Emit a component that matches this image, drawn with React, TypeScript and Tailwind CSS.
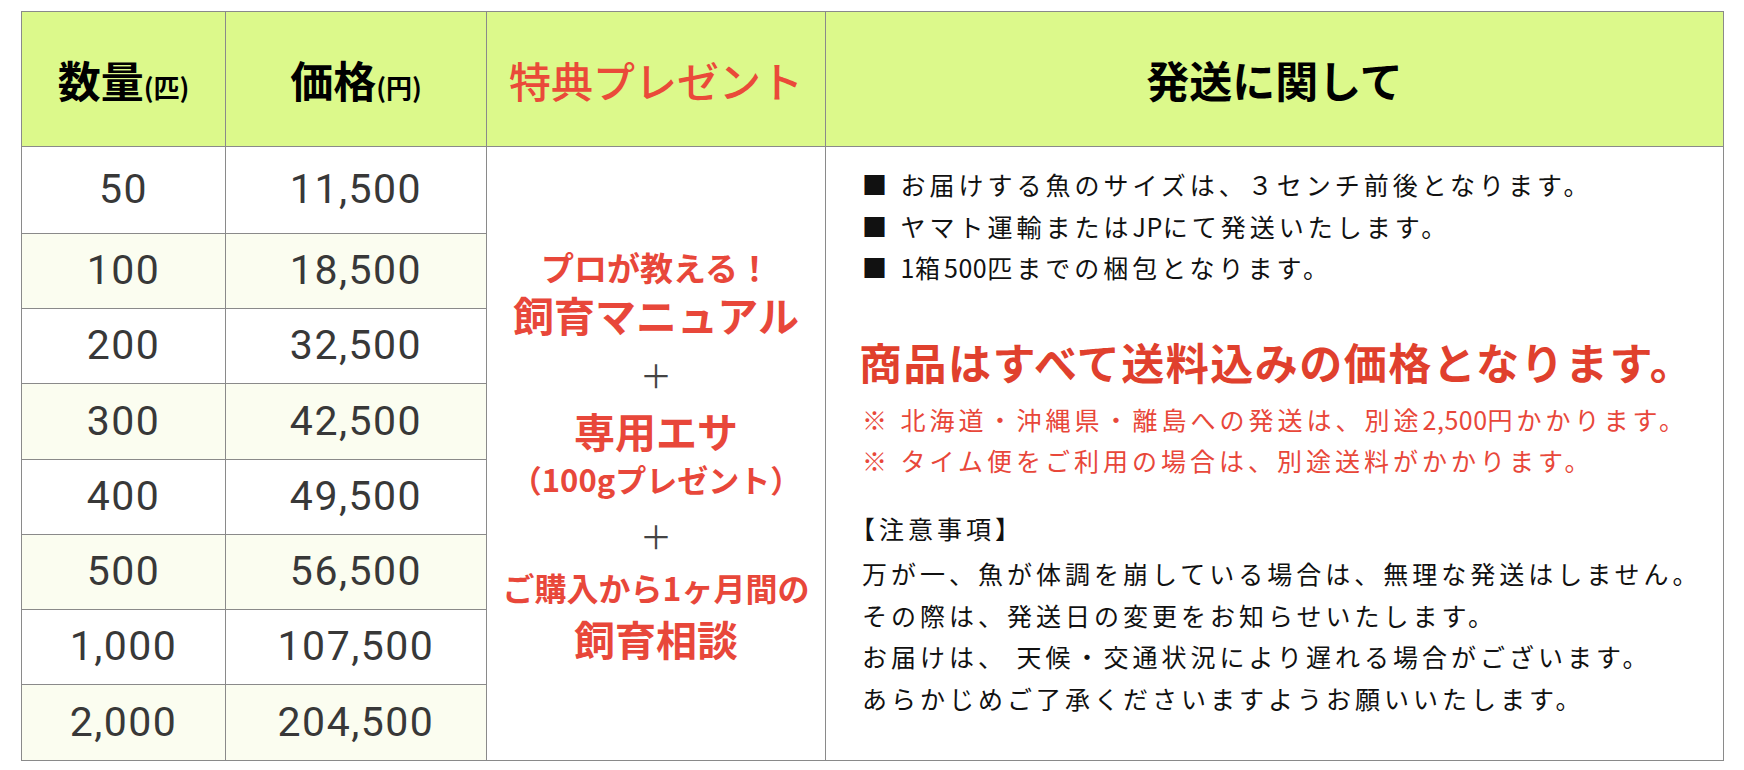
const jp = "font-['Noto_Sans_CJK_JP',sans-serif]";

const rows = [
  { qty: "50", price: "11,500" },
  { qty: "100", price: "18,500" },
  { qty: "200", price: "32,500" },
  { qty: "300", price: "42,500" },
  { qty: "400", price: "49,500" },
  { qty: "500", price: "56,500" },
  { qty: "1,000", price: "107,500" },
  { qty: "2,000", price: "204,500" },
];

const cell = "border-r border-b border-[#8a8a8a]";
const head = `${cell} bg-[#dcf98b] flex items-center justify-center`;
const num =
  "font-['Roboto','Liberation_Sans',sans-serif] font-normal text-[41px] tracking-[1.5px] text-[#383838]";
// half-width runs inside the tracked Japanese text
const hw = "tracking-[0.5px]";

export default function App() {
  return (
    <div className={`min-h-screen bg-white pt-[11px] pl-[21px] ${jp}`}>
      <div className="grid w-[1703px] grid-cols-[204px_261px_339px_898px] grid-rows-[135px_87px_75px_75px_76px_75px_75px_75px_76px] border-l border-t border-[#8a8a8a]">
        {/* header */}
        <div className={head}>
          <span className="text-[43px] font-bold text-black">
            数量<span className="text-[26px]">(匹)</span>
          </span>
        </div>
        <div className={head}>
          <span className="text-[43px] font-bold text-black">
            価格<span className="text-[26px]">(円)</span>
          </span>
        </div>
        <div className={head}>
          <span className="text-[42px] font-medium text-[#ea4a39]">特典プレゼント</span>
        </div>
        <div className={head}>
          <span className="text-[43px] font-bold text-black">発送に関して</span>
        </div>

        {/* qty / price rows */}
        {rows.map((r, i) => {
          const bg = i % 2 === 1 ? "bg-[#fbfdf0]" : "bg-white";
          return [
            <div
              key={`q${i}`}
              className={`${cell} ${bg} col-start-1 flex items-center justify-center ${num}`}
              style={{ gridRowStart: i + 2 }}
            >
              {r.qty}
            </div>,
            <div
              key={`p${i}`}
              className={`${cell} ${bg} col-start-2 flex items-center justify-center ${num}`}
              style={{ gridRowStart: i + 2 }}
            >
              {r.price}
            </div>,
          ];
        })}

        {/* present column */}
        <div
          className={`${cell} col-start-3 row-start-2 row-span-8 flex flex-col items-center justify-center bg-white text-center font-bold text-[#e8473a]`}
        >
          <div className="text-[33px] leading-[46px]">プロが教える！</div>
          <div className="text-[41px] leading-[48px]">飼育マニュアル</div>
          <div className="text-[32px] font-normal leading-[72px] text-[#444]">＋</div>
          <div className="text-[41px] leading-[40px]">専用エサ</div>
          <div className="text-[31px] leading-[58px]">（100gプレゼント）</div>
          <div className="text-[32px] font-normal leading-[54px] text-[#444]">＋</div>
          <div className="text-[32px] leading-[50px]">ご購入から1ヶ月間の</div>
          <div className="text-[41px] leading-[52px]">飼育相談</div>
        </div>

        {/* shipping column */}
        <div
          className={`${cell} col-start-4 row-start-2 row-span-8 bg-white pl-[36px] pt-[17px] text-[25px] leading-[41.5px] tracking-[4px] text-[#111]`}
        >
          <div>■ お届けする魚のサイズは、３センチ前後となります。</div>
          <div>
            ■ ヤマト運輸または<span className={hw}>JP</span>にて発送いたします。
          </div>
          <div>
            ■ <span className={hw}>1</span>箱<span className={hw}>500</span>匹までの梱包となります。
          </div>

          <div className="mt-[42px] -ml-[3px] text-[43px] font-bold leading-[60px] tracking-[1.5px] text-[#e0402d]">
            商品はすべて送料込みの価格となります。
          </div>
          <div className="mt-[8px] text-[#e8473a]">
            <div>
              ※ 北海道・沖縄県・離島への発送は、別途<span className={hw}>2,500</span>円かかります。
            </div>
            <div>※ タイム便をご利用の場合は、別途送料がかかります。</div>
          </div>

          <div className="mt-[26px] mb-[4px] -ml-[12px]">【注意事項】</div>
          <div>万が一、魚が体調を崩している場合は、無理な発送はしません。</div>
          <div>その際は、発送日の変更をお知らせいたします。</div>
          <div>お届けは、 天候・交通状況により遅れる場合がございます。</div>
          <div>あらかじめご了承くださいますようお願いいたします。</div>
        </div>
      </div>
    </div>
  );
}
